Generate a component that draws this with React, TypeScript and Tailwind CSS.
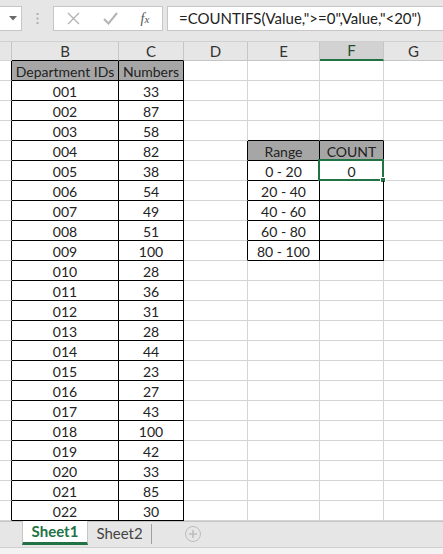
import React from "react";

const ids = ["001","002","003","004","005","006","007","008","009","010","011","012","013","014","015","016","017","018","019","020","021","022"];
const nums = ["33","87","58","82","38","54","49","51","100","28","36","31","28","44","23","27","43","100","42","33","85","30"];
const ranges = ["0 - 20","20 - 40","40 - 60","60 - 80","80 - 100"];

const G = "border-[#d4d4d4]";

export default function App() {
  const rows = Array.from({ length: 23 }, (_, i) => i);
  return (
    <div className="w-[443px] h-[554px] overflow-hidden bg-white flex flex-col text-[14px] text-[#222]" style={{ fontFamily: "Lato, 'Liberation Sans', sans-serif" }}>
      {/* formula bar */}
      <div className="h-[42px] bg-[#e6e6e6] flex items-start pt-[6px] border-b border-[#d0d0d0] shrink-0">
        <div className="w-[22px] h-[25px] bg-white border border-[#c6c6c6] border-l-0 flex items-center justify-end pr-[4px]">
          <svg width="8" height="5" viewBox="0 0 8 5"><path d="M0 0h8L4 4.5z" fill="#6a6a6a" /></svg>
        </div>
        <div className="w-[31px] h-[25px] flex items-center justify-center">
          <svg width="3" height="11" viewBox="0 0 3 11"><rect x="0.5" y="0" width="2" height="2" fill="#b0b0b0"/><rect x="0.5" y="4.5" width="2" height="2" fill="#b0b0b0"/><rect x="0.5" y="9" width="2" height="2" fill="#b0b0b0"/></svg>
        </div>
        <div className="w-[110px] h-[25px] bg-white border border-[#c6c6c6] flex items-center">
          <div className="w-[38px] flex justify-center ml-[0px]">
            <svg width="13" height="13" viewBox="0 0 13 13"><path d="M1 1L12 12M12 1L1 12" stroke="#b4b4b4" strokeWidth="1.4" /></svg>
          </div>
          <div className="w-[36px] flex justify-center">
            <svg width="15" height="13" viewBox="0 0 15 13"><path d="M1 7L5.5 11.5L14 1" stroke="#b4b4b4" strokeWidth="2" fill="none" /></svg>
          </div>
          <div className="w-[34px] flex justify-center text-[#555] italic text-[14px]" style={{ fontFamily: "'Liberation Serif', serif" }}>
            f<span className="text-[11px] mt-[3px]">x</span>
          </div>
        </div>
        <div className="ml-[4px] flex-1 h-[25px] bg-white border border-[#c6c6c6] border-r-0 flex items-center pl-[11px] text-[15px] text-[#222] whitespace-nowrap">
          =COUNTIFS(Value,"&gt;=0",Value,"&lt;20")
        </div>
      </div>
      {/* column header */}
      <div className="h-[19px] flex bg-[#e6e6e6] shrink-0 text-[15px] text-[#333] leading-none">
        <div className={`w-[12px] border-r border-b ${G} border-r-[#c6c6c6]`} />
        <div className="w-[107px] border-r border-[#c6c6c6] border-b border-b-black flex items-center justify-center">B</div>
        <div className="w-[65px] border-r border-[#c6c6c6] border-b border-b-black flex items-center justify-center">C</div>
        <div className="w-[64px] border-r border-b border-[#c6c6c6] flex items-center justify-center">D</div>
        <div className="w-[72px] border-r border-b border-[#c6c6c6] flex items-center justify-center">E</div>
        <div className="w-[64px] border-r border-[#c6c6c6] bg-[#d2d2d2] border-b-2 border-b-[#217346] flex items-center justify-center text-[#1f4e30]">F</div>
        <div className="flex-1 border-b border-[#c6c6c6] flex items-center justify-center">G</div>
      </div>
      {/* grid */}
      <div className="flex flex-col shrink-0">
        {rows.map((i) => {
          const isHead = i === 0;
          const rIdx = i - 5;
          const inRange = i >= 4 && i <= 9;
          const rangeHead = i === 4;
          return (
            <div key={i} className="h-[20px] flex leading-none">
              <div className={`w-[12px] border-b ${G} border-r border-r-black`} />
              <div className={`w-[107px] border-r border-b border-black flex items-center justify-center pt-[2px] ${isHead ? "bg-[#a6a6a6]" : ""}`}>
                {isHead ? "Department IDs" : ids[i - 1]}
              </div>
              <div className={`w-[65px] border-r border-b border-black flex items-center justify-center pt-[2px] ${isHead ? "bg-[#a6a6a6]" : ""}`}>
                {isHead ? "Numbers" : nums[i - 1]}
              </div>
              <div className={`w-[64px] border-b ${G} border-r ${inRange ? "border-r-black" : ""}`} />
              <div className={`w-[72px] border-r flex items-center justify-center pt-[2px] ${inRange ? "border-r-black" : G} border-b ${i >= 3 && i <= 9 ? "border-b-black" : ""} ${rangeHead ? "bg-[#a6a6a6]" : ""}`}>
                {rangeHead ? "Range" : rIdx >= 0 && rIdx < 5 ? ranges[rIdx] : ""}
              </div>
              <div className={`relative w-[64px] border-r flex items-center justify-center pt-[2px] ${inRange ? "border-r-black" : G} border-b ${i >= 3 && i <= 9 ? "border-b-black" : ""} ${rangeHead ? "bg-[#a6a6a6]" : ""}`}>
                {rangeHead ? "COUNT" : i === 5 ? "0" : ""}
                {i === 5 && (
                  <div className="absolute left-[-2px] top-[-2px] right-[-1px] bottom-[-1px] border-2 border-[#217346]">
                    <div className="absolute right-[-4px] bottom-[-4px] w-[6px] h-[6px] bg-[#217346] border border-white" />
                  </div>
                )}
              </div>
              <div className={`flex-1 border-b ${G}`} />
            </div>
          );
        })}
      </div>
      {/* tabs */}
      <div className="h-[26px] bg-[#e6e6e6] border-t border-[#c6c6c6] flex items-start shrink-0 relative">
        <div className="ml-[22px] w-[66px] h-[24px] bg-white border-b-[3px] border-[#217346] border-x border-x-[#c6c6c6] -mt-[1px] flex items-center justify-center font-bold text-[#217346] text-[15px]">
          Sheet1
        </div>
        <div className="w-[63px] h-[23px] flex items-center justify-center text-[#444] text-[15px]">Sheet2</div>
        <div className="w-px h-[20px] bg-[#a0a0a0] mt-[2px]" />
        <div className="ml-[33px] mt-[4px] w-[16px] h-[16px] rounded-full border border-[#bdbdbd] flex items-center justify-center">
          <svg width="8" height="8" viewBox="0 0 8 8"><path d="M4 0V8M0 4H8" stroke="#bdbdbd" strokeWidth="1.6" /></svg>
        </div>
      </div>
      <div className="flex-1 bg-[#f3f3f3] border-t border-[#d0d0d0]" />
    </div>
  );
}
